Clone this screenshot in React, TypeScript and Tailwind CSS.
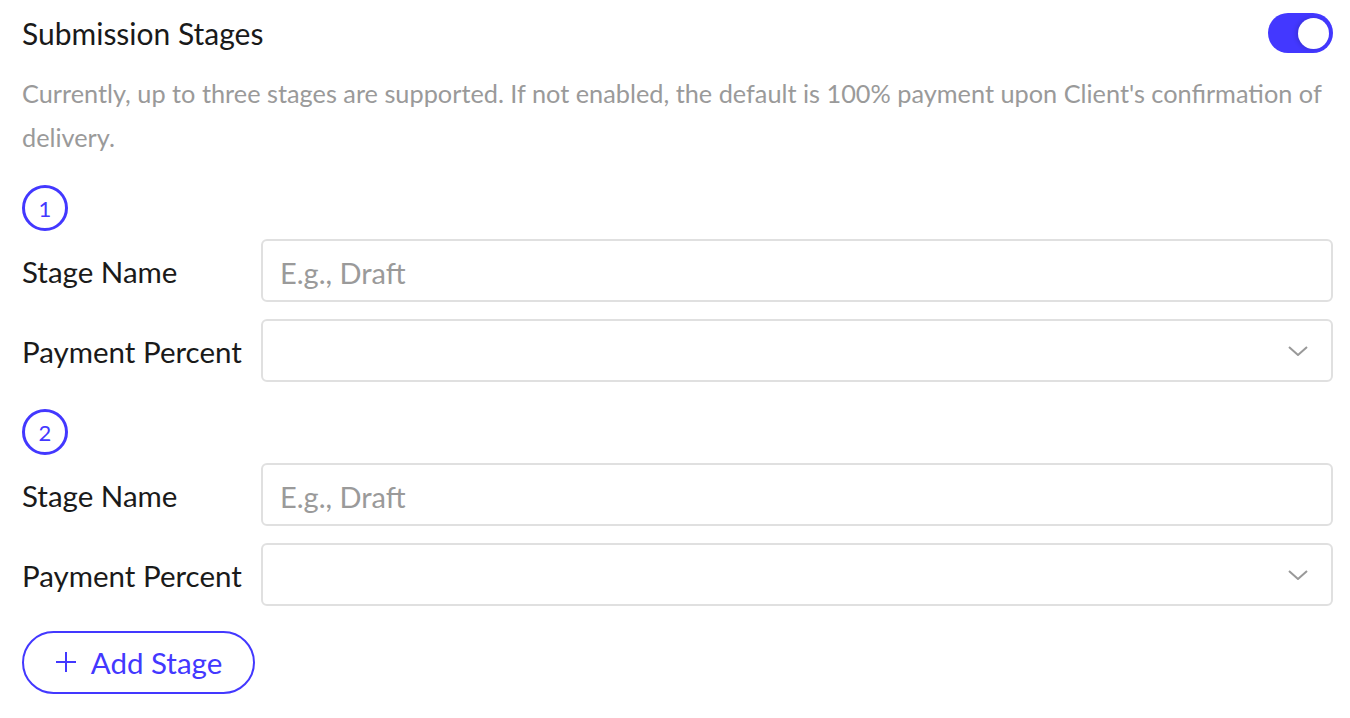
import { useState } from "react";

type Stage = {
  name: string;
  percent: string;
};

function StageRow({ index }: { index: number }) {
  return (
    <div>
      <div className="w-[46px] h-[46px] rounded-full border-[3px] border-[#4338ff] flex items-center justify-center text-[22px] text-[#4338ff]">
        {index}
      </div>

      <div className="mt-[8px] flex flex-col gap-[17px]">
        <div className="grid grid-cols-[239px_1fr] items-center">
          <span className="pt-[3px] text-[29.5px] text-[#1a1a1a]">Stage Name</span>
          <input
            placeholder="E.g., Draft"
            className="h-[63px] rounded-[6px] border-2 border-[#e0e0e0] px-[17px] pt-[3px] text-[29px] text-[#1a1a1a] placeholder:text-[#9a9a9a] outline-none"
          />
        </div>

        <div className="grid grid-cols-[239px_1fr] items-center">
          <span className="pt-[3px] text-[29.5px] text-[#1a1a1a]">Payment Percent</span>
          <div className="h-[63px] rounded-[6px] border-2 border-[#e0e0e0] flex items-center justify-end pr-[23px]">
            <svg width="20" height="10" viewBox="0 0 20 10" fill="none">
              <path d="M1 1l9 8 9-8" stroke="#999" strokeWidth="2" />
            </svg>
          </div>
        </div>
      </div>
    </div>
  );
}

export default function App() {
  const [enabled, setEnabled] = useState(true);
  const [stages] = useState<Stage[]>([
    { name: "", percent: "" },
    { name: "", percent: "" },
  ]);

  return (
    <main
      className="min-h-screen bg-white pl-[22px] pr-[17px] pt-[13px]"
      style={{ fontFamily: "Lato, 'Open Sans', sans-serif" }}
    >
      <div className="flex items-center justify-between h-[40px]">
        <h1 className="text-[30px] text-[#1a1a1a]">Submission Stages</h1>

        <button
          onClick={() => setEnabled(!enabled)}
          className="w-[65px] h-[40px] rounded-full bg-[#4338ff] flex items-center justify-end pr-[4px]"
        >
          <span className="w-[31px] h-[31px] rounded-full bg-white shadow-[-2px_0_4px_rgba(0,0,0,0.15)]" />
        </button>
      </div>

      <p className="mt-[18px] text-[25.3px] leading-[44px] text-[#9a9a9a]">
        Currently, up to three stages are supported. If not enabled, the default is 100% payment upon Client's confirmation of delivery.
      </p>

      <div className="mt-[26px] flex flex-col gap-[27px]">
        {stages.map((_, i) => (
          <StageRow key={i} index={i + 1} />
        ))}
      </div>

      <button className="mt-[25px] w-[233px] h-[63px] rounded-full border-2 border-[#4338ff] flex items-center justify-center gap-[14px] pt-[2px] text-[29.5px] text-[#4338ff]">
        <svg width="22" height="22" viewBox="0 0 22 22" fill="none" className="-mt-[4px]">
          <path d="M11 1v20M1 11h20" stroke="#4338ff" strokeWidth="2" />
        </svg>
        Add Stage
      </button>
    </main>
  );
}
